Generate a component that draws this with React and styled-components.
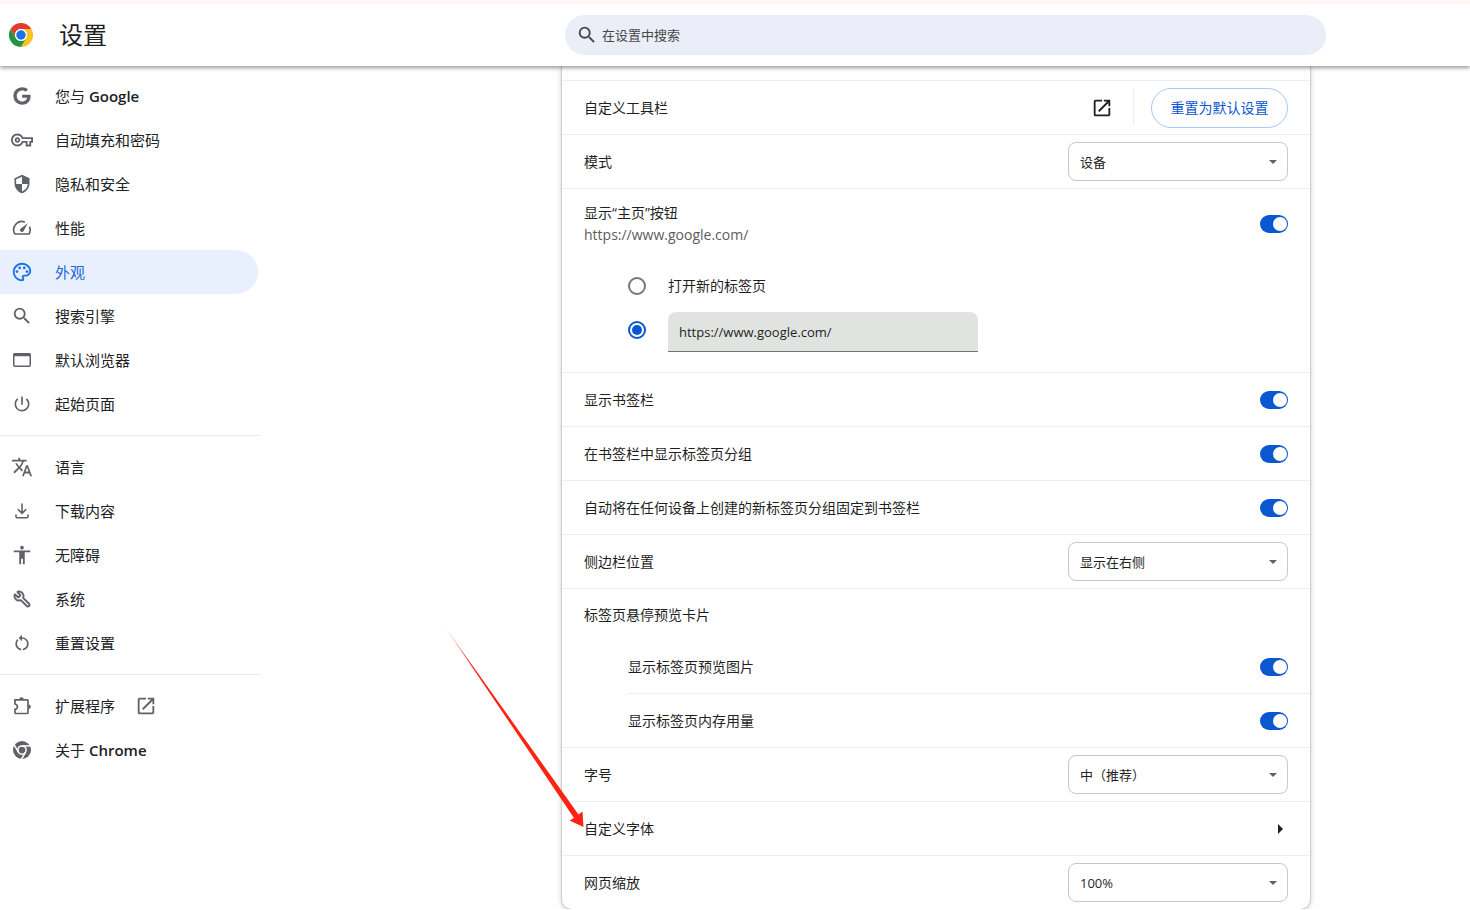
import React, { useState } from 'react'
import styled, { createGlobalStyle } from 'styled-components'
import { FaGoogle } from 'react-icons/fa'
import { Wrench } from 'lucide-react'
import {
    MdAccessibility,
    MdOpenInNew,
    MdOutlinePalette,
    MdOutlineVpnKey,
    MdPowerSettingsNew,
    MdRestartAlt,
    MdSearch,
    MdSecurity,
    MdTranslate,
} from 'react-icons/md'

const HOME_URL = 'https://www.google.com/'

const GaugeIcon = () => (
    <svg width="20" height="20" viewBox="0 0 20 20" fill="none" stroke="currentColor" strokeWidth="1.7" aria-hidden="true">
        <path d="M12.800 4.100A8.200 8.200 0 0 0 2.900 16h14.200a8.200 8.200 0 0 0 .3-7.400" />
        <path d="M15.800 5.200l-4 7.600a2 2 0 1 1-3-2.400z" fill="currentColor" stroke="none" />
    </svg>
)

const WindowIcon = () => (
    <svg width="20" height="20" viewBox="0 0 20 20" fill="none" stroke="currentColor" aria-hidden="true">
        <rect x="1.750" y="3.750" width="16.500" height="12.500" rx="1" strokeWidth="1.5" />
        <path d="M1.500 5h17" strokeWidth="2.5" />
    </svg>
)

const DownloadIcon = () => (
    <svg width="20" height="20" viewBox="0 0 20 20" fill="none" stroke="currentColor" strokeWidth="1.6" aria-hidden="true">
        <path d="M10 2.500v9.500M5.800 8.200l4.200 4.200 4.200-4.200M4 13.500v2a1.200 1.200 0 0 0 1.200 1.200h9.600a1.200 1.200 0 0 0 1.200-1.200v-2" />
    </svg>
)

const PuzzleIcon = () => (
    <svg width="20" height="20" viewBox="0 0 20 20" fill="none" stroke="currentColor" strokeWidth="1.7" aria-hidden="true">
        <path d="M3 3.900h12.200a.8.8 0 0 1 .8.8v12a.8.8 0 0 1-.8.8H3.800a.8.8 0 0 1-.8-.8v-3.300q2.400-.5 2.400-2.700T3 8z" />
        <path d="M7.200 3.500a2.300 2.300 0 0 1 4.600 0zM16.500 8.400a2.300 2.300 0 0 1 0 4.600z" fill="currentColor" stroke="none" />
    </svg>
)

const ChromeIcon = () => (
    <svg width="18" height="18" viewBox="0 0 24 24" aria-hidden="true">
        <circle cx="12" cy="12" r="12" fill="currentColor" />
        <g fill="none" stroke="#fff" strokeWidth="2">
            <circle cx="12" cy="12" r="5.500" />
            <path id="seam" d="M12 6.500h12" />
            <path d="M12 6.500h12" transform="rotate(120 12 12)" />
            <path d="M12 6.500h12" transform="rotate(240 12 12)" />
        </g>
    </svg>
)

const menuGroups = [
    [
        { id: 'people', icon: <FaGoogle size={18} />, text: '您与', latin: 'Google' },
        { id: 'autofill', icon: <MdOutlineVpnKey size={22} />, text: '自动填充和密码' },
        { id: 'privacy', icon: <MdSecurity size={20} />, text: '隐私和安全' },
        { id: 'performance', icon: <GaugeIcon />, text: '性能' },
        { id: 'appearance', icon: <MdOutlinePalette size={22} />, text: '外观' },
        { id: 'search', icon: <MdSearch size={22} />, text: '搜索引擎' },
        { id: 'browser', icon: <WindowIcon />, text: '默认浏览器' },
        { id: 'startup', icon: <MdPowerSettingsNew size={20} />, text: '起始页面' },
    ],
    [
        { id: 'languages', icon: <MdTranslate size={22} />, text: '语言' },
        { id: 'downloads', icon: <DownloadIcon />, text: '下载内容' },
        { id: 'a11y', icon: <MdAccessibility size={22} />, text: '无障碍' },
        { id: 'system', icon: <FlippedWrench size={18} strokeWidth={2.5} />, text: '系统' },
        { id: 'reset', icon: <MdRestartAlt size={20} />, text: '重置设置' },
    ],
    [
        { id: 'extensions', icon: <PuzzleIcon />, text: '扩展程序', external: true },
        { id: 'about', icon: <ChromeIcon />, text: '关于', latin: 'Chrome' },
    ],
]

const ChromeLogo = () => (
    <svg width="24" height="24" viewBox="0 0 48 48" aria-hidden="true">
        <path d="M3.2 12A24 24 0 0 1 44.8 12H24a12 12 0 0 0-10.4 18z" fill="#e33b2e" />
        <path d="M44.8 12A24 24 0 0 1 24 48l10.4-18A12 12 0 0 0 24 12z" fill="#fcc31e" />
        <path d="M24 48A24 24 0 0 1 3.2 12l10.4 18a12 12 0 0 0 20.8 0z" fill="#229342" />
        <circle cx="24" cy="24" r="12" fill="#fff" />
        <circle cx="24" cy="24" r="9.5" fill="#1a73e8" />
    </svg>
)

const Select = ({ id, options }) => (
    <SelectBox>
        <SelectField id={id}>
            {options.map(option => <option key={option}>{option}</option>)}
        </SelectField>
        <SelectArrow width="8" height="4" viewBox="0 0 8 4" aria-hidden="true">
            <path d="M0 0h8L4 4z" />
        </SelectArrow>
    </SelectBox>
)

const ToggleRow = ({ id, text, sub, tall, inset }) => {
    const [ on, setOn ] = useState(true)

    return (
        <Row $tall={tall} $inset={inset}>
            <RowLabel htmlFor={id}>
                {text}
                {sub && <SubText>{sub}</SubText>}
            </RowLabel>
            <Toggle id={id} checked={on} onChange={() => setOn(!on)} />
        </Row>
    )
}

const SelectRow = ({ id, text, options }) => (
    <Row>
        <RowLabel htmlFor={id}>{text}</RowLabel>
        <Select id={id} options={options} />
    </Row>
)

const Sidebar = () => {
    const [ active, setActive ] = useState('appearance')

    return (
        <Menu>
            {menuGroups.map(group => (
                <MenuGroup key={group[0].id}>
                    {group.map(item => (
                        <MenuItem
                            key={item.id}
                            href={`#${item.id}`}
                            $active={item.id === active}
                            onClick={() => setActive(item.id)}
                        >
                            <MenuIcon>{item.icon}</MenuIcon>
                            <MenuText>
                                {item.text}
                                {item.latin && <MenuLatin> {item.latin}</MenuLatin>}
                            </MenuText>
                            {item.external && <MenuIcon><MdOpenInNew size={22} /></MenuIcon>}
                        </MenuItem>
                    ))}
                </MenuGroup>
            ))}
        </Menu>
    )
}

const HomeButtonSection = () => {
    const [ home, setHome ] = useState('custom')

    return (
        <Section>
            <ToggleRow id="home-button" text="显示“主页”按钮" sub={HOME_URL} tall />
            <RadioList>
                <RadioRow>
                    <Radio
                        id="home-newtab"
                        name="home"
                        checked={home === 'newtab'}
                        onChange={() => setHome('newtab')}
                    />
                    <label htmlFor="home-newtab">打开新的标签页</label>
                </RadioRow>
                <RadioRow>
                    <Radio
                        name="home"
                        aria-label="自定义网址"
                        checked={home === 'custom'}
                        onChange={() => setHome('custom')}
                    />
                    <UrlInput aria-label="主页网址" defaultValue={HOME_URL} />
                </RadioRow>
            </RadioList>
        </Section>
    )
}

const Pointer = () => (
    <PointerSvg width="140" height="202" viewBox="0 0 140 202" aria-hidden="true">
        <defs>
            <linearGradient id="fade" x1="0" y1="0" x2="0" y2="1">
                <stop offset="0" stopColor="#ff2314" stopOpacity="0.3" />
                <stop offset="0.2" stopColor="#ff2314" />
            </linearGradient>
        </defs>
        <path d="M0 0L133.500 187.500 137.500 184.500 138.500 200 124.500 193.500 129 191z" fill="url(#fade)" />
    </PointerSvg>
)

const App = () => (
    <>
        <GlobalStyle />
        <Header>
            <Brand>
                <ChromeLogo />
                <Title>设置</Title>
            </Brand>
            <SearchArea>
                <SearchBox>
                    <MdSearch size={22} />
                    <SearchInput type="search" placeholder="在设置中搜索" aria-label="在设置中搜索" />
                </SearchBox>
            </SearchArea>
        </Header>
        <Page>
            <Sidebar />
            <Main>
                <Card>
                    <Section>
                        <Row>
                            <RowText>自定义工具栏</RowText>
                            <IconButton aria-label="自定义工具栏"><MdOpenInNew size={22} /></IconButton>
                            <ResetArea>
                                <ResetButton>重置为默认设置</ResetButton>
                            </ResetArea>
                        </Row>
                    </Section>
                    <Section>
                        <SelectRow id="mode" text="模式" options={['设备', '浅色', '深色']} />
                    </Section>
                    <HomeButtonSection />
                    <Section>
                        <ToggleRow id="bookmarks" text="显示书签栏" />
                    </Section>
                    <Section>
                        <ToggleRow id="groups" text="在书签栏中显示标签页分组" />
                    </Section>
                    <Section>
                        <ToggleRow id="pin-groups" text="自动将在任何设备上创建的新标签页分组固定到书签栏" />
                    </Section>
                    <Section>
                        <SelectRow id="side-panel" text="侧边栏位置" options={['显示在右侧', '显示在左侧']} />
                    </Section>
                    <Section>
                        <SectionTitle>标签页悬停预览卡片</SectionTitle>
                        <SubList>
                            <ToggleRow id="hover-image" text="显示标签页预览图片" inset />
                            <ToggleRow id="hover-memory" text="显示标签页内存用量" inset />
                        </SubList>
                    </Section>
                    <Section>
                        <SelectRow id="font-size" text="字号" options={['中（推荐）', '小', '大']} />
                    </Section>
                    <Section>
                        <LinkRow>
                            自定义字体
                            <svg width="16" height="16" viewBox="0 0 16 16" aria-hidden="true">
                                <path d="M6 3l5 5-5 5z" fill="currentColor" />
                            </svg>
                        </LinkRow>
                    </Section>
                    <Section>
                        <SelectRow id="zoom" text="网页缩放" options={['100%', '110%', '125%']} />
                    </Section>
                    <Pointer />
                </Card>
            </Main>
        </Page>
    </>
)

const GlobalStyle = createGlobalStyle`
    * {
        box-sizing: border-box;
    }

    body {
        margin: 0;
        background: #fff;
        color: #1f1f1f;
        font-family: 'Open Sans', 'Noto Sans CJK SC', sans-serif;
        font-size: 14px;
        line-height: 22px;
    }

    button, input, select {
        margin: 0;
        font: inherit;
        color: inherit;
    }

    svg {
        display: block;
        flex: none;
    }
`

function FlippedWrench(props) {
    return <WrenchIcon {...props} />
}

const WrenchIcon = styled(Wrench)`
    transform: scaleX(-1);
`

const Header = styled.header`
    position: sticky;
    top: 0;
    z-index: 1;
    display: flex;
    align-items: center;
    height: 66px;
    border-top: 4px solid #fff7f3;
    background: #fff;
    box-shadow: 0 2px 4px rgba(0, 0, 0, 0.4);
`

const Brand = styled.div`
    display: flex;
    align-items: center;
    gap: 26px;
    flex: 0 0 421px;
    padding-left: 9px;
`

const Title = styled.h1`
    margin: 0;
    font-size: 24px;
    font-weight: 400;
    line-height: 32px;
`

const SearchArea = styled.div`
    flex: 1;
    display: flex;
    justify-content: center;
`

const SearchBox = styled.div`
    display: flex;
    align-items: center;
    gap: 4px;
    width: 100%;
    max-width: 761px;
    height: 40px;
    padding: 0 11px;
    border-radius: 20px;
    background: #ebeef8;
    color: #474747;
`

const SearchInput = styled.input`
    flex: 1;
    border: 0;
    padding: 0;
    outline: none;
    background: none;
    font-size: 13px;

    &::placeholder {
        color: #474747;
        opacity: 1;
    }
`

const Page = styled.div`
    display: flex;
    align-items: flex-start;
`

const Menu = styled.nav`
    flex: 0 0 260px;
    padding-top: 8px;
`

const MenuGroup = styled.div`
    & + & {
        margin-top: 9px;
        padding-top: 9px;
        border-top: 1px solid #e8eaed;
    }
`

const MenuItem = styled.a`
    display: flex;
    align-items: center;
    height: 44px;
    margin-right: 2px;
    padding-left: 11px;
    border-radius: 0 22px 22px 0;
    background: ${({ $active }) => $active ? '#e8f0fe' : 'none'};
    color: ${({ $active }) => $active ? '#1967d2' : '#202124'};
    font-size: 15px;
    text-decoration: none;

    svg {
        color: ${({ $active }) => $active ? '#1a73e8' : '#5f6368'};
    }
`

const MenuIcon = styled.span`
    display: flex;
    align-items: center;
    justify-content: center;
    width: 22px;
    height: 22px;
`

const MenuText = styled.span`
    margin: 0 20px 0 22px;
`

const MenuLatin = styled.span`
    font-weight: 600;
`

const Main = styled.main`
    flex: 1;
    min-width: 0;
    padding-left: 142px;
`

const Card = styled.div`
    position: relative;
    max-width: 748px;
    margin: 0 auto;
    padding-top: 14px;
    border-radius: 0 0 9px 9px;
    background: #fff;
    box-shadow: 0 0 2px rgba(0, 0, 0, 0.4), 0 1px 6px rgba(0, 0, 0, 0.2);
`

const Section = styled.section`
    border-top: 1px solid #ededed;
`

const Row = styled.div`
    display: flex;
    align-items: center;
    height: ${({ $tall }) => $tall ? '70px' : '53px'};
    padding: ${({ $inset }) => $inset ? '0 22px 0 0' : '0 22px'};
`

const RowLabel = styled.label`
    flex: 1;
`

const RowText = styled.span`
    flex: 1;
`

const SubText = styled.span`
    display: block;
    color: #5c5c5c;
`

const IconButton = styled.button`
    display: flex;
    align-items: center;
    justify-content: center;
    width: 40px;
    height: 40px;
    margin-right: 11px;
    padding: 0;
    border: 0;
    background: none;
`

const ResetArea = styled.div`
    display: flex;
    align-items: center;
    gap: 17px;

    &::before {
        content: '';
        height: 35px;
        border-left: 1px solid #ededed;
    }
`

const ResetButton = styled.button`
    min-width: 137px;
    height: 40px;
    padding: 0 16px;
    border: 1px solid #a8c7fa;
    border-radius: 20px;
    background: #fff;
    color: #0b57d0;
`

const SelectBox = styled.div`
    display: grid;
    grid-template-columns: 1fr 19px;
    align-items: center;
    width: 220px;
`

const SelectField = styled.select`
    grid-area: 1 / 1 / 2 / 3;
    height: 39px;
    padding: 1px 24px 0 11px;
    appearance: none;
    border: 1px solid #c7c7c7;
    border-radius: 8px;
    background: #fff;
    font-size: 13px;
`

const SelectArrow = styled.svg`
    grid-area: 1 / 2 / 2 / 3;
    fill: #5f6368;
    pointer-events: none;
`

const Toggle = styled.input.attrs({ type: 'checkbox', role: 'switch' })`
    appearance: none;
    width: 28px;
    height: 18px;
    padding: 2px 1px;
    border-radius: 9px;
    background: #c7c7c7;

    &::before {
        content: '';
        display: block;
        width: 14px;
        height: 14px;
        border-radius: 50%;
        background: #fff;
    }

    &:checked {
        background: #0b57d0;
    }

    &:checked::before {
        margin-left: 12px;
    }
`

const RadioList = styled.div`
    padding: 5px 22px 20px 66px;
`

const RadioRow = styled.div`
    display: flex;
    align-items: center;
    gap: 22px;
    height: 44px;
`

const Radio = styled.input.attrs({ type: 'radio' })`
    appearance: none;
    display: grid;
    place-items: center;
    width: 18px;
    height: 18px;
    border: 2px solid #747775;
    border-radius: 50%;

    &:checked {
        border-color: #0b57d0;
    }

    &:checked::before {
        content: '';
        width: 10px;
        height: 10px;
        border-radius: 50%;
        background: #0b57d0;
    }
`

const UrlInput = styled.input`
    align-self: flex-end;
    width: 310px;
    height: 40px;
    padding: 0 11px;
    border: 0;
    border-bottom: 1px solid #747775;
    border-radius: 8px 8px 0 0;
    outline: none;
    background: #e1e3e1;
    font-size: 13px;
`

const SectionTitle = styled.h2`
    display: flex;
    align-items: center;
    height: 51px;
    margin: 0;
    padding: 0 22px;
    font-size: 14px;
    font-weight: 400;
`

const SubList = styled.div`
    margin-left: 66px;

    > * + * {
        height: 54px;
        border-top: 1px solid #ededed;
    }
`

const LinkRow = styled.button`
    display: flex;
    align-items: center;
    justify-content: space-between;
    width: 100%;
    height: 53px;
    padding: 0 22px;
    border: 0;
    background: none;
    text-align: left;
`

const PointerSvg = styled.svg`
    position: absolute;
    top: 561px;
    left: -117px;
    pointer-events: none;
`

export default App
